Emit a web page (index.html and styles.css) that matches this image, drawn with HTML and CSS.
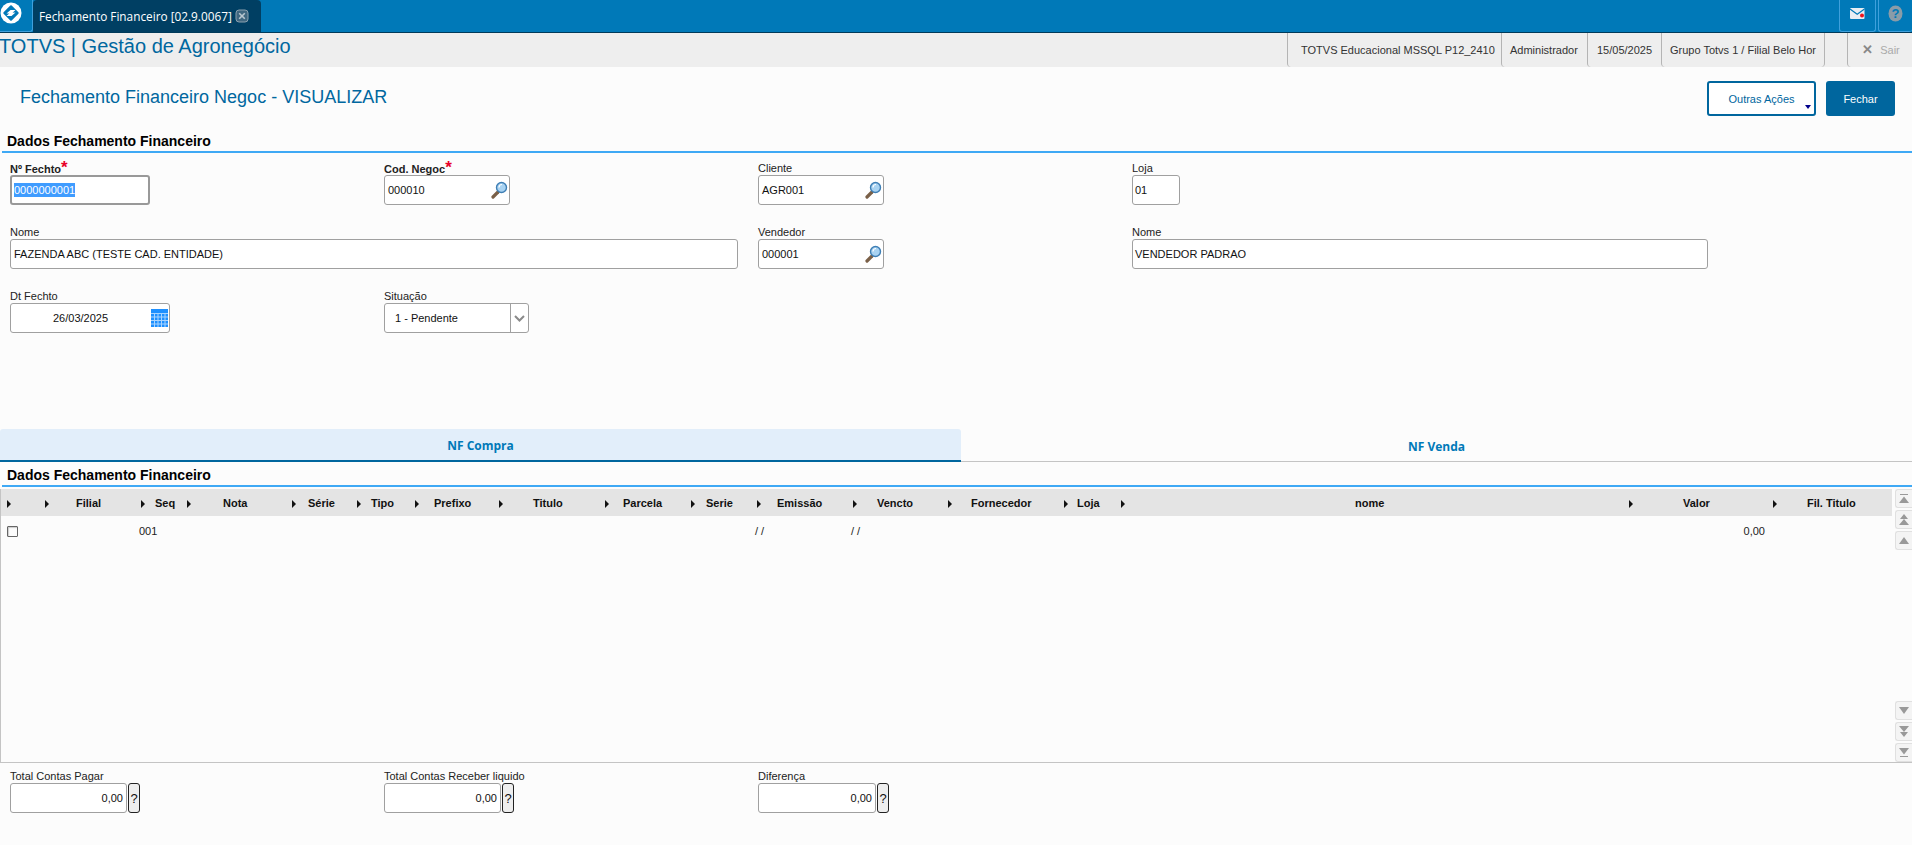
FILE: index.html
```html
<!DOCTYPE html>
<html lang="pt-BR">
<head>
<meta charset="utf-8">
<title>Fechamento Financeiro</title>
<link rel="stylesheet" href="styles.css">
</head>
<body>
<header class="topbar">
  <div class="logo">
    <svg width="22" height="22" viewBox="0 0 22 22"><circle cx="11" cy="11" r="10.500" fill="#fff"/><path d="M11 4.300 17.700 11 11 17.700 4.300 11z" fill="#0079b8" stroke="#0079b8" stroke-width="2" stroke-linejoin="round"/><path d="M6.500 11.500 10.500 8h5l-3.500 3.200H9.800z M15.500 10.500 11.500 14h-5l3.500-3.200h2.200z" fill="#fff"/></svg>
  </div>
  <div class="apptab">
    <span>Fechamento Financeiro [02.9.0067]</span>
    <svg class="tabclose" width="14" height="14" viewBox="0 0 14 14"><rect x="1" y="1" width="12" height="12" rx="3" fill="#3f6780" stroke="#8aa0ae"/><path d="M4.200 4.200l5.600 5.600M9.800 4.200 4.200 9.800" stroke="#b9c7d0" stroke-width="1.600"/></svg>
  </div>
  <div class="topactions">
    <div class="topbtn topbtn-mail">
      <svg width="16" height="13" viewBox="0 0 16 13"><rect y="1" width="14.500" height="11" rx="1" fill="#e8eef3"/><path d="M0 2l7.200 5.200L14.500 2" fill="none" stroke="#0079b8" stroke-width="1.200"/><circle cx="12" cy="8.500" r="2" fill="#f0141e"/></svg>
    </div>
    <div class="topbtn topbtn-help">
      <svg width="15" height="17" viewBox="0 0 15 17"><ellipse cx="7.500" cy="8.500" rx="7" ry="8" fill="#8a9ca8"/><text x="7.500" y="13" text-anchor="middle" class="helpmark">?</text></svg>
    </div>
  </div>
</header>

<div class="infobar">
  <div class="brand">TOTVS | Gestão de Agronegócio</div>
  <div class="infocells">
    <div class="cell cell-env">TOTVS Educacional MSSQL P12_2410</div>
    <div class="cell cell-user">Administrador</div>
    <div class="cell cell-date">15/05/2025</div>
    <div class="cell cell-branch">Grupo Totvs 1 / Filial Belo Hor</div>
    <div class="cell cell-exit"><span class="exitx">✕</span><span>Sair</span></div>
  </div>
</div>

<div class="titlebar">
  <h1 class="pagetitle">Fechamento Financeiro Negoc - VISUALIZAR</h1>
  <div class="actions">
    <button class="btn btn-outline">Outras Ações<i class="caret"></i></button>
    <button class="btn btn-solid">Fechar</button>
  </div>
</div>

<h2 class="section">Dados Fechamento Financeiro</h2>

<section class="form">
  <div class="field">
    <label class="lbl lbl-bold">Nº Fechto<em>*</em></label>
    <div class="inp inp-focus w-fechto"><span class="sel">0000000001</span></div>
  </div>
  <div class="field">
    <label class="lbl lbl-bold">Cod. Negoc<em>*</em></label>
    <div class="inp w-lookup">000010
      <svg class="lens" width="17" height="18" viewBox="0 0 17 18"><path d="M7 11l-5 5" stroke="#7a6048" stroke-width="3.200" stroke-linecap="round"/><circle cx="10.500" cy="6.500" r="5" fill="#a9d3f2" stroke="#3f7fb5" stroke-width="1.400"/><path d="M8 6.500a3 3 0 0 1 3-3" stroke="#fff" stroke-width="1.200" fill="none"/></svg>
    </div>
  </div>
  <div class="field">
    <label class="lbl">Cliente</label>
    <div class="inp w-lookup">AGR001
      <svg class="lens" width="17" height="18" viewBox="0 0 17 18"><path d="M7 11l-5 5" stroke="#7a6048" stroke-width="3.200" stroke-linecap="round"/><circle cx="10.500" cy="6.500" r="5" fill="#a9d3f2" stroke="#3f7fb5" stroke-width="1.400"/><path d="M8 6.500a3 3 0 0 1 3-3" stroke="#fff" stroke-width="1.200" fill="none"/></svg>
    </div>
  </div>
  <div class="field">
    <label class="lbl">Loja</label>
    <div class="inp w-loja">01</div>
  </div>

  <div class="field span2">
    <label class="lbl">Nome</label>
    <div class="inp w-nome">FAZENDA ABC (TESTE CAD. ENTIDADE)</div>
  </div>
  <div class="field">
    <label class="lbl">Vendedor</label>
    <div class="inp w-lookup">000001
      <svg class="lens" width="17" height="18" viewBox="0 0 17 18"><path d="M7 11l-5 5" stroke="#7a6048" stroke-width="3.200" stroke-linecap="round"/><circle cx="10.500" cy="6.500" r="5" fill="#a9d3f2" stroke="#3f7fb5" stroke-width="1.400"/><path d="M8 6.500a3 3 0 0 1 3-3" stroke="#fff" stroke-width="1.200" fill="none"/></svg>
    </div>
  </div>
  <div class="field">
    <label class="lbl">Nome</label>
    <div class="inp w-vend">VENDEDOR PADRAO</div>
  </div>

  <div class="field">
    <label class="lbl">Dt Fechto</label>
    <div class="inp w-date"><span class="dateval">26/03/2025</span>
      <svg class="cal" width="17" height="18" viewBox="0 0 17 18"><rect width="17" height="18" fill="#1e90ff"/><path d="M0 4.500h17M0 8h17M0 11.500h17M0 15h17M3.500 4v14M7 4v14M10.500 4v14M14 4v14" stroke="#a8d4ff" stroke-width="1"/></svg>
    </div>
  </div>
  <div class="field">
    <label class="lbl">Situação</label>
    <div class="inp w-select"><span class="selval">1 - Pendente</span>
      <span class="selbtn"><svg width="11" height="7" viewBox="0 0 11 7"><path d="M1 1l4.500 4.500L10 1" fill="none" stroke="#8a8a8a" stroke-width="2"/></svg></span>
    </div>
  </div>
</section>

<nav class="tabs">
  <div class="tab tab-active">NF Compra</div>
  <div class="tab">NF Venda</div>
</nav>

<h2 class="section section-grid">Dados Fechamento Financeiro</h2>

<section class="gridwrap">
  <div class="gridbox">
    <table class="grid">
      <colgroup>
        <col class="c0"><col class="c1"><col class="c2"><col class="c3"><col class="c4"><col class="c5"><col class="c6"><col class="c7"><col class="c8"><col class="c9"><col class="c10"><col class="c11"><col class="c12"><col class="c13"><col class="c14"><col class="c15"><col class="c16">
      </colgroup>
      <thead>
        <tr>
          <th><i class="arrow"></i></th>
          <th><i class="arrow"></i><span class="m-filial">Filial</span></th>
          <th><i class="arrow"></i><span class="m-seq">Seq</span></th>
          <th><i class="arrow"></i><span class="m-nota">Nota</span></th>
          <th><i class="arrow"></i><span class="m-serie">Série</span></th>
          <th><i class="arrow"></i><span class="m-tipo">Tipo</span></th>
          <th><i class="arrow"></i><span class="m-prefixo">Prefixo</span></th>
          <th><i class="arrow"></i><span class="m-titulo">Titulo</span></th>
          <th><i class="arrow"></i><span class="m-parcela">Parcela</span></th>
          <th><i class="arrow"></i><span class="m-serie2">Serie</span></th>
          <th><i class="arrow"></i><span class="m-emissao">Emissão</span></th>
          <th><i class="arrow"></i><span class="m-vencto">Vencto</span></th>
          <th><i class="arrow"></i><span class="m-forn">Fornecedor</span></th>
          <th><i class="arrow"></i><span class="m-loja">Loja</span></th>
          <th><i class="arrow"></i><span class="m-nome">nome</span></th>
          <th><i class="arrow"></i><span class="m-valor">Valor</span></th>
          <th><i class="arrow"></i><span class="m-fil">Fil. Titulo</span></th>
        </tr>
      </thead>
      <tbody>
        <tr>
          <td><i class="check"></i></td>
          <td></td>
          <td class="td-seq">001</td>
          <td></td><td></td><td></td><td></td><td></td><td></td><td></td>
          <td class="td-date">/ /</td>
          <td class="td-date">/ /</td>
          <td></td><td></td><td></td>
          <td class="td-val">0,00</td>
          <td></td>
        </tr>
      </tbody>
    </table>
  </div>
  <div class="scroll">
    <div class="scrollgroup">
      <div class="sbtn"><svg width="10" height="9" viewBox="0 0 10 9"><path d="M1 .5h8" stroke="#999"/><path d="M5 2.500 10 9H0z" fill="#999"/></svg></div>
      <div class="sbtn"><svg width="10" height="11" viewBox="0 0 10 11"><path d="M5 0l4 5H1zM5 5l5 6H0z" fill="#999"/></svg></div>
      <div class="sbtn"><svg width="10" height="7" viewBox="0 0 10 7"><path d="M5 0l5 7H0z" fill="#999"/></svg></div>
    </div>
    <div class="scrollgroup">
      <div class="sbtn"><svg width="10" height="7" viewBox="0 0 10 7"><path d="M0 0h10L5 7z" fill="#999"/></svg></div>
      <div class="sbtn"><svg width="10" height="11" viewBox="0 0 10 11"><path d="M0 0h10L5 6zM1 6h8l-4 5z" fill="#999"/></svg></div>
      <div class="sbtn"><svg width="10" height="9" viewBox="0 0 10 9"><path d="M0 0h10L5 6.500z" fill="#999"/><path d="M1 8.500h8" stroke="#999"/></svg></div>
    </div>
  </div>
</section>

<section class="totals">
  <div class="field">
    <label class="lbl">Total Contas Pagar</label>
    <div class="totalrow"><div class="inp inp-num w-t1">0,00</div><button class="qbtn">?</button></div>
  </div>
  <div class="field">
    <label class="lbl">Total Contas Receber liquido</label>
    <div class="totalrow"><div class="inp inp-num w-t2">0,00</div><button class="qbtn">?</button></div>
  </div>
  <div class="field">
    <label class="lbl">Diferença</label>
    <div class="totalrow"><div class="inp inp-num w-t3">0,00</div><button class="qbtn">?</button></div>
  </div>
</section>
</body>
</html>
```

FILE: styles.css
```css
* { box-sizing: border-box; }
html, body { margin: 0; padding: 0; height: 100%; overflow: hidden; }
body { background: #fcfcfc; font-family: "Liberation Sans", Arial, sans-serif; font-size: 11px; color: #111; }

/* top bar */
.topbar { height: 33px; background: #0079b8; border-bottom: 1px solid #003a5a; display: flex; align-items: stretch; }
.logo { width: 33px; border-right: 1px solid #3fa0dc; border-bottom: 1px solid #3fa0dc; border-bottom-right-radius: 3px; padding: 2px 0 0 0; }
.logo svg { display: block; }
.apptab { width: 228px; background: #003f63; border-radius: 4px 4px 0 0; color: #fff; display: flex; align-items: center; padding-left: 6px; gap: 3px; font: 11.8px "Open Sans", sans-serif; }
.tabclose { flex: none; }
.topactions { margin-left: auto; display: flex; gap: 2px; }
.topbtn { border: 1px solid #3fa0dc; border-top: 0; border-radius: 0 0 3px 3px; display: flex; align-items: center; justify-content: center; height: 32px; padding-bottom: 5px; }
.topbtn-mail { width: 37px; }
.topbtn-help { width: 34px; border-right: 0; }
.helpmark { font: bold 13px "Liberation Sans", sans-serif; fill: #0079b8; }

/* info bar */
.infobar { height: 34px; background: #eeeeee; display: flex; justify-content: space-between; }
.brand { font-size: 20px; color: #00679f; line-height: 27px; white-space: nowrap; margin-left: -1px; }
.infocells { display: flex; width: 625px; }
.cell { height: 34px; line-height: 34px; border-left: 1px solid #b4b4b4; border-radius: 0 0 0 4px; color: #333; white-space: nowrap; overflow: hidden; }
.cell-env { width: 214px; padding-left: 13px; }
.cell-user { width: 86px; padding-left: 8px; }
.cell-date { width: 74px; padding-left: 9px; }
.cell-branch { width: 164px; padding-left: 8px; border-right: 1px solid #b4b4b4; border-radius: 0 0 4px 4px; }
.cell-exit { margin-left: 22px; width: 65px; display: flex; gap: 7px; align-items: center; justify-content: center; padding-left: 2px; color: #aaa; }
.exitx { color: #888; font-size: 13px; font-weight: bold; }

/* title */
.titlebar { display: flex; justify-content: space-between; align-items: flex-start; padding: 14px 17px 0 20px; height: 66px; }
.pagetitle { margin: 0; font-size: 18px; font-weight: normal; color: #00679f; line-height: 24px; padding-top: 4px; }
.actions { display: flex; gap: 10px; }
.btn { height: 35px; border-radius: 3px; font: 11px "Liberation Sans", sans-serif; padding: 0; position: relative; }
.btn-outline { width: 109px; background: #fff; border: 2px solid #00669e; color: #00669e; }
.btn-solid { width: 69px; background: #00669e; border: 0; color: #fff; }
.caret { position: absolute; right: 3px; bottom: 5px; border: 3.500px solid transparent; border-top: 4px solid #00008b; border-bottom: 0; }

/* section headings */
.section { margin: 0 0 0 2px; font-size: 14px; line-height: 16px; font-weight: bold; color: #000; padding-left: 5px; border-bottom: 2px solid #3fa9f5; height: 20px; }
.section-grid { margin-top: 4px; height: 21px; line-height: 18px; }

/* form */
.form { display: grid; grid-template-columns: repeat(4, 374px); row-gap: 21px; padding: 9px 0 0 10px; }
.field { display: flex; flex-direction: column; align-items: flex-start; min-width: 0; }
.span2 { grid-column: span 2; }
.lbl { height: 13px; line-height: 13px; color: #222; white-space: nowrap; }
.lbl-bold { font-weight: bold; line-height: 15px; }
.lbl em { color: #e8002a; font-style: normal; font-size: 17px; line-height: 10px; font-weight: bold; }
.inp { height: 30px; background: #fff; border: 1px solid #a0a0a0; border-radius: 3px; display: flex; align-items: center; padding-left: 3px; color: #111; white-space: nowrap; }
.inp-focus { border: 2px solid #999; padding-left: 2px; }
.sel { background: #3f9cff; color: #fff; line-height: 14px; }
.w-fechto { width: 140px; }
.w-lookup { width: 126px; justify-content: space-between; padding-right: 1px; }
.w-loja { width: 48px; padding-left: 2px; }
.w-nome { width: 728px; }
.w-vend { width: 576px; padding-left: 2px; }
.w-date { width: 160px; padding-right: 1px; justify-content: space-between; }
.w-select { width: 145px; padding: 0; }
.dateval { padding-left: 39px; }
.selval { flex: 1; padding-left: 10px; }
.selbtn { width: 18px; height: 100%; border-left: 1px solid #a0a0a0; display: flex; align-items: center; justify-content: center; }

/* tabs */
.tabs { margin-top: 96px; display: grid; grid-template-columns: 961px 1fr; height: 33px; border-bottom: 1px solid #c4c4c4; align-items: stretch; }
.tab { display: flex; align-items: center; justify-content: center; font: bold 12px "Open Sans", sans-serif; color: #0079b8; padding-top: 3px; }
.tab-active { background: #e2eefa; border-radius: 3px 3px 0 0; border-bottom: 2px solid #00669e; margin-bottom: -1px; padding-top: 1px; }

/* grid */
.gridwrap { display: flex; gap: 3px; height: 274px; margin-top: 2px; border-bottom: 1px solid #c4c4c4; }
.gridbox { width: 1892px; flex: none; border-left: 1px solid #c4c4c4; }
.grid { width: 1891px; table-layout: fixed; border-collapse: collapse; }
.c0 { width: 39px; } .c1 { width: 96px; } .c2 { width: 46px; } .c3 { width: 105px; } .c4 { width: 65px; } .c5 { width: 58px; } .c6 { width: 84px; } .c7 { width: 106px; } .c8 { width: 86px; } .c9 { width: 66px; } .c10 { width: 96px; } .c11 { width: 95px; } .c12 { width: 116px; } .c13 { width: 57px; } .c14 { width: 508px; } .c15 { width: 144px; } .c16 { width: 124px; }
.grid th { height: 27px; padding: 0; background: #e4e4e4; text-align: left; font-size: 11px; font-weight: bold; color: #111; white-space: nowrap; }
.grid td { height: 30px; padding: 0; color: #222; }
.arrow { display: inline-block; width: 0; height: 0; margin-left: 5px; margin-right: 5px; border-left: 4px solid #111; border-top: 4px solid transparent; border-bottom: 4px solid transparent; vertical-align: -1px; }
.grid th:first-child .arrow { margin-left: 6px; }
.m-filial { margin-left: 22px; } .m-seq { margin-left: 5px; } .m-nota { margin-left: 27px; } .m-serie { margin-left: 7px; } .m-tipo { margin-left: 5px; } .m-prefixo { margin-left: 10px; } .m-titulo { margin-left: 25px; } .m-parcela { margin-left: 9px; } .m-serie2 { margin-left: 6px; } .m-emissao { margin-left: 11px; } .m-vencto { margin-left: 15px; } .m-forn { margin-left: 14px; } .m-loja { margin-left: 4px; } .m-nome { margin-left: 225px; } .m-valor { margin-left: 45px; } .m-fil { margin-left: 25px; }
.check { display: block; width: 11px; height: 11px; margin-left: 6px; background: #fcfcfc; border: 1px solid #666; border-radius: 1px; box-shadow: inset 1px 1px 1px #ccc; }
.grid .td-seq { padding-left: 3px; }
.grid .td-date { padding-left: 3px; }
.grid .td-val { text-align: right; padding-right: 3px; }
.scroll { width: 17px; display: flex; flex-direction: column; justify-content: space-between; }
.scrollgroup { display: flex; flex-direction: column; gap: 2px; }
.sbtn { height: 19px; background: #f4f4f4; border: 1px solid #e0e0e0; border-right: 0; border-radius: 3px 0 0 3px; display: flex; align-items: center; justify-content: center; }

/* totals */
.totals { display: grid; grid-template-columns: repeat(3, 374px); padding: 7px 0 0 10px; }
.totalrow { display: flex; gap: 1px; }
.inp-num { justify-content: flex-end; padding: 0 3px 0 0; }
.w-t1, .w-t2 { width: 117px; }
.w-t3 { width: 118px; }
.qbtn { width: 12px; height: 30px; padding: 0; background: #eee; border: 1px solid #222; border-radius: 3px; font: 13px "Liberation Sans", sans-serif; color: #111; }
```
